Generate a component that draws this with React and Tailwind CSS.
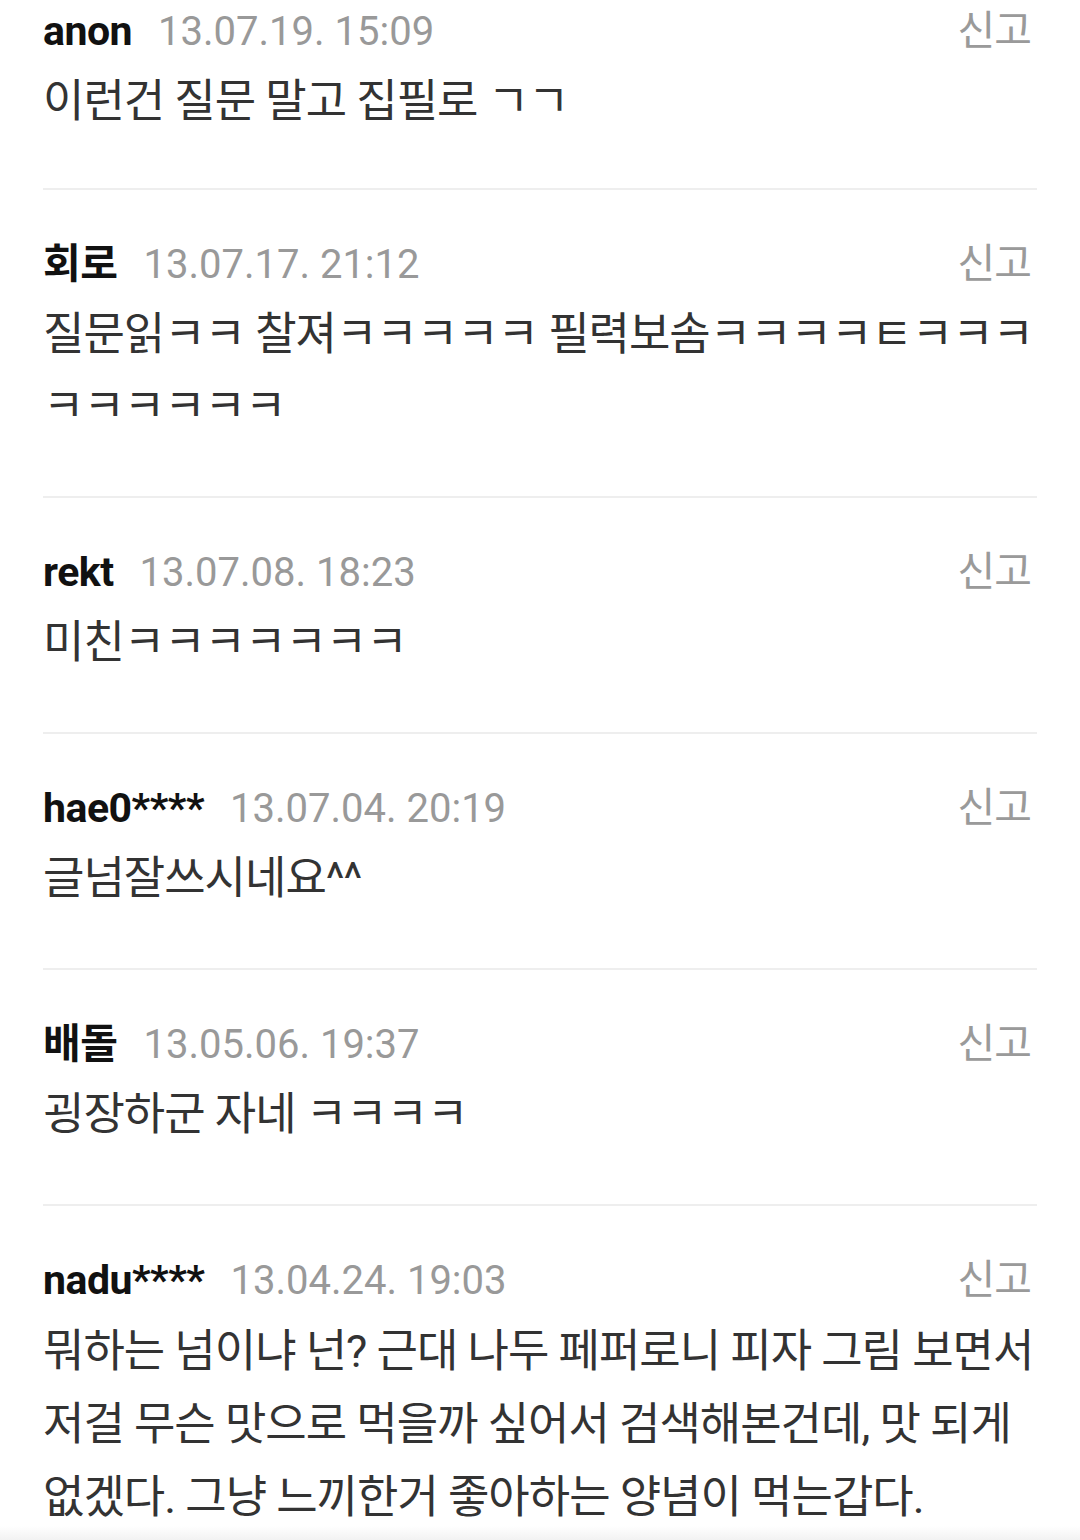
import React from "react";

const comments = [
  { name: "anon", date: "13.07.19. 15:09", text: "이런건 질문 말고 집필로 ㄱㄱ" },
  { name: "회로", date: "13.07.17. 21:12", text: "질문읽ㅋㅋ 찰져ㅋㅋㅋㅋㅋ 필력보솜ㅋㅋㅋㅋㅌㅋㅋㅋㅋㅋㅋㅋㅋㅋ" },
  { name: "rekt", date: "13.07.08. 18:23", text: "미친ㅋㅋㅋㅋㅋㅋㅋ" },
  { name: "hae0****", date: "13.07.04. 20:19", text: "글넘잘쓰시네요^^" },
  { name: "배돌", date: "13.05.06. 19:37", text: "굉장하군 자네 ㅋㅋㅋㅋ" },
  {
    name: "nadu****",
    date: "13.04.24. 19:03",
    text: "뭐하는 넘이냐 넌? 근대 나두 페퍼로니 피자 그림 보면서 저걸 무슨 맛으로 먹을까 싶어서 검색해본건데, 맛 되게 없겠다. 그냥 느끼한거 좋아하는 양념이 먹는갑다.",
    keepAll: true,
  },
];

const font = { fontFamily: 'Roboto, "Noto Sans CJK KR", sans-serif' };

const Comment = ({ c, first }) => (
  <div className={first ? "-mt-[2px] pb-[50px]" : "pt-[41px] pb-[53px]"}>
    <div className="h-[68px] flex items-center justify-between">
      <div className="flex items-center">
        <span className="text-[41px] font-bold text-[#111111] tracking-[-0.5px]">
          {c.name}
        </span>
        <span className="ml-[26px] text-[40px] text-[#999999]">{c.date}</span>
      </div>
      <span className="pr-[6px] text-[41px] tracking-[-1px] text-[#9a9a9a]">신고</span>
    </div>
    <p
      className={
        "text-[45px] tracking-[-1px] text-[#333333]" +
        (c.keepAll ? " break-keep leading-[73px]" : " leading-[72px]")
      }
    >
      {c.text}
    </p>
  </div>
);

export default function App() {
  return (
    <div className="w-[1080px] h-[1540px] overflow-hidden bg-white relative" style={font}>
      <div className="px-[43px]">
        {comments.map((c, i) => (
          <div key={i} className={i < comments.length - 1 ? "border-b-2 border-[#eeeeee]" : ""}>
            <Comment c={c} first={i === 0} />
          </div>
        ))}
      </div>
      <div className="absolute left-0 right-0 bottom-0 h-[14px] bg-gradient-to-b from-white to-[#f2f2f2]" />
    </div>
  );
}
